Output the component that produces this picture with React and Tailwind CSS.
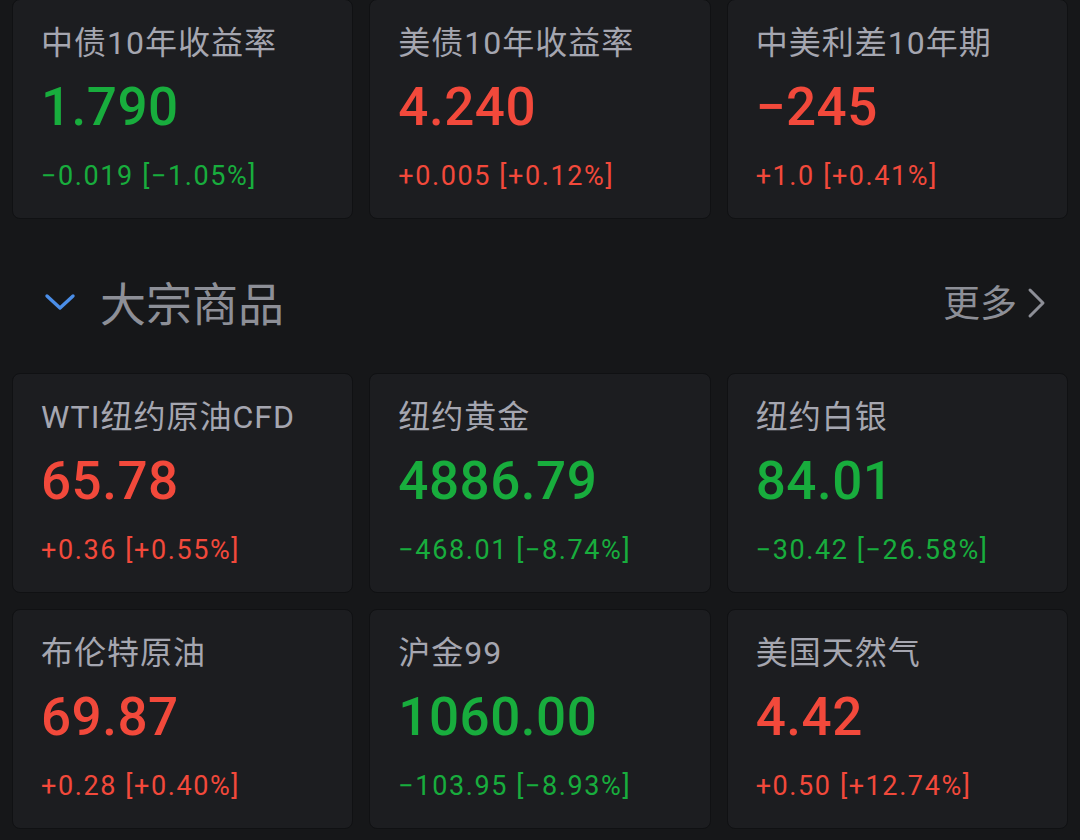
import React from 'react';

const bonds = [
    { name: '中债10年收益率', value: '1.790', change: '-0.019 [-1.05%]', up: false },
    { name: '美债10年收益率', value: '4.240', change: '+0.005 [+0.12%]', up: true },
    { name: '中美利差10年期', value: '-245', change: '+1.0 [+0.41%]', up: true },
];

const commodities = [
    { name: 'WTI纽约原油CFD', value: '65.78', change: '+0.36 [+0.55%]', up: true },
    { name: '纽约黄金', value: '4886.79', change: '-468.01 [-8.74%]', up: false },
    { name: '纽约白银', value: '84.01', change: '-30.42 [-26.58%]', up: false },
    { name: '布伦特原油', value: '69.87', change: '+0.28 [+0.40%]', up: true },
    { name: '沪金99', value: '1060.00', change: '-103.95 [-8.93%]', up: false },
    { name: '美国天然气', value: '4.42', change: '+0.50 [+12.74%]', up: true },
];

function QuoteCard({ item }) {
    const color = item.up ? 'text-[#f2493b]' : 'text-[#18ad3d]';
    return (
        <div className="h-[220px] rounded-lg border border-[#101113] bg-[#1c1d20] pl-[28px] pt-[24px] flex flex-col">
            <div className="text-[32px] leading-[38px] tracking-[1px] text-[#a5a6b0] whitespace-nowrap">
                {item.name}
            </div>
            <div className={`mt-[15px] text-[53px] leading-[60px] font-medium tracking-[0.5px] ${color}`}>
                {item.value.replace('-', '−')}
            </div>
            <div className={`mt-[23px] text-[27px] leading-[32px] tracking-[1.6px] ${color}`}>
                {item.change.replace(/-/g, '−')}
            </div>
        </div>
    );
}

export default function App() {
    return (
        <div
            className="w-[1080px] h-[840px] overflow-hidden bg-[#161719]"
            style={{ fontFamily: 'Roboto, "Noto Sans CJK SC", sans-serif' }}
        >
            <div className="px-3 grid grid-cols-3 gap-4 -mt-px">
                {bonds.map((b) => (
                    <QuoteCard key={b.name} item={b} />
                ))}
            </div>

            {/* section header */}
            <div className="h-[154px] flex items-center justify-between pl-[44px] pr-[33px] pt-[18px]">
                <div className="flex items-center">
                    <svg width="32" height="20" viewBox="0 0 32 20" className="-mt-[6px]">
                        <path d="M3 4 L16 16 L29 4" fill="none" stroke="#4b8ee8" strokeWidth="3.4" strokeLinecap="round" strokeLinejoin="round" />
                    </svg>
                    <span className="ml-[24px] text-[46px] leading-[52px] text-[#8d8f97]">大宗商品</span>
                </div>
                <div className="flex items-center">
                    <span className="text-[37px] leading-[44px] text-[#8d8f97]">更多</span>
                    <svg width="22" height="32" viewBox="0 0 22 32" className="ml-[8px] -mt-[4px]">
                        <path d="M5 3 L18 16 L5 29" fill="none" stroke="#8d8f97" strokeWidth="3" strokeLinecap="round" strokeLinejoin="round" />
                    </svg>
                </div>
            </div>

            <div className="px-3 grid grid-cols-3 gap-x-4 gap-y-[16px]">
                {commodities.map((c) => (
                    <QuoteCard key={c.name} item={c} />
                ))}
            </div>
        </div>
    );
}
